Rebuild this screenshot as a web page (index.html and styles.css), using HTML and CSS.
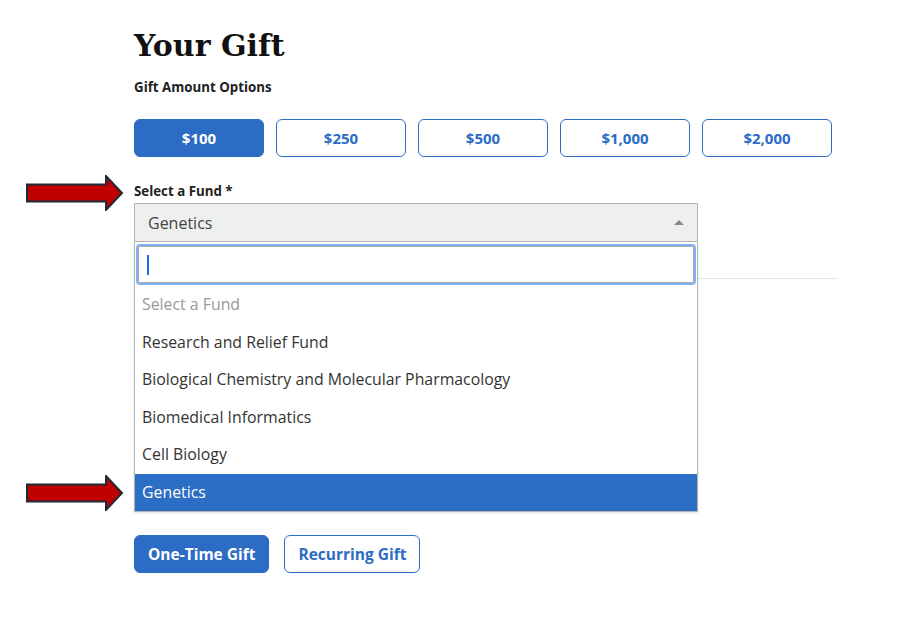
FILE: index.html
```html
<!DOCTYPE html>
<html lang="en">
<head>
    <meta charset="UTF-8">
    <meta name="viewport" content="width=device-width, initial-scale=1.0">
    <title>Your Gift</title>
    <link rel="stylesheet" href="styles.css">
</head>
<body>
    <div class="page">
        <h1 class="title">Your Gift</h1>
        <div class="field-label amount-label">Gift Amount Options</div>
        <div class="amounts">
            <button class="btn btn-solid">$100</button>
            <button class="btn btn-outline">$250</button>
            <button class="btn btn-outline">$500</button>
            <button class="btn btn-outline">$1,000</button>
            <button class="btn btn-outline">$2,000</button>
        </div>

        <div class="field-label fund-label">Select a Fund *</div>
        <div class="select">
            <div class="select-box">
                <span class="select-value">Genetics</span>
                <span class="select-caret"></span>
            </div>
            <div class="dropdown">
                <div class="search">
                    <span class="text-cursor"></span>
                </div>
                <ul class="options">
                    <li class="option placeholder">Select a Fund</li>
                    <li class="option">Research and Relief Fund</li>
                    <li class="option">Biological Chemistry and Molecular Pharmacology</li>
                    <li class="option">Biomedical Informatics</li>
                    <li class="option">Cell Biology</li>
                    <li class="option selected">Genetics</li>
                </ul>
            </div>
        </div>

        <hr class="divider">

        <div class="frequency">
            <button class="btn btn-solid btn-wide">One-Time Gift</button>
            <button class="btn btn-outline btn-wide">Recurring Gift</button>
        </div>
    </div>

    <svg class="pointer pointer-top" width="98" height="36" viewBox="0 0 98 36">
        <path d="M1 9.5 H80 V1 L96 18 L80 35 V26.5 H1 Z" fill="#c00000" stroke="#1d2b38" stroke-width="2" stroke-linejoin="miter"/>
    </svg>
    <svg class="pointer pointer-bottom" width="98" height="36" viewBox="0 0 98 36">
        <path d="M1 9.5 H80 V1 L96 18 L80 35 V26.5 H1 Z" fill="#c00000" stroke="#1d2b38" stroke-width="2" stroke-linejoin="miter"/>
    </svg>
</body>
</html>
```

FILE: styles.css
```css
body {
    margin: 0;
    background-color: #fff;
    font-family: 'Open Sans', 'Noto Sans', sans-serif;
    color: #222;
}

.page {
    padding: 28px 0 0 134px;
}

.title {
    margin: 0;
    font-family: 'DejaVu Serif', 'Liberation Serif', serif;
    font-size: 30px;
    line-height: 36px;
    font-weight: bold;
    color: #111;
}

.field-label {
    font-size: 13.3px;
    font-weight: bold;
    line-height: 18px;
    color: #222;
}

.amount-label {
    margin-top: 14px;
}

.amounts {
    display: flex;
    gap: 12px;
    margin-top: 23px;
}

.btn {
    box-sizing: border-box;
    height: 38px;
    width: 130px;
    border-radius: 6px;
    font-family: 'Open Sans', 'Noto Sans', sans-serif;
    font-size: 15px;
    font-weight: bold;
    cursor: pointer;
}

.btn-solid {
    background-color: #2c6cc5;
    border: 1px solid #2c6cc5;
    color: #fff;
}

.btn-outline {
    background-color: #fff;
    border: 1px solid #2c6cc5;
    color: #2c6cc5;
}

.btn-wide {
    width: auto;
    padding: 0 13px;
    font-size: 15.5px;
}

.fund-label {
    margin-top: 25px;
}

.select {
    position: relative;
    width: 564px;
    margin-top: 3px;
}

.select-box {
    box-sizing: border-box;
    height: 39px;
    display: flex;
    align-items: center;
    justify-content: space-between;
    padding: 0 13px;
    background-color: #eeefef;
    border: 1px solid #b4b4b4;
    font-size: 16px;
    color: #444;
}

.select-caret {
    width: 0;
    height: 0;
    border-left: 5px solid transparent;
    border-right: 5px solid transparent;
    border-bottom: 5px solid #888;
}

.dropdown {
    position: absolute;
    top: 100%;
    left: 0;
    right: 0;
    z-index: 10;
    background-color: #fff;
    border: 1px solid #b4b4b4;
    border-top: none;
    box-shadow: 0 1px 2px rgba(0, 0, 0, 0.12);
}

.search {
    box-sizing: border-box;
    height: 37px;
    margin: 4px 3px 3px 3px;
    border: 1px solid #a9a9a9;
    box-shadow: 0 0 0 2px #80b2f6;
    border-radius: 2px;
    display: flex;
    align-items: center;
    padding-left: 8px;
}

.text-cursor {
    width: 2px;
    height: 20px;
    background-color: #1a6cf0;
}

.options {
    list-style: none;
    margin: 0;
    padding: 0;
}

.option {
    padding: 8px 7px;
    line-height: 21.5px;
    font-size: 15.85px;
    color: #333;
}

.option.placeholder {
    color: #999;
}

.option.selected {
    background-color: #2c6dc6;
    color: #fff;
}

.divider {
    width: 704px;
    margin: 36px 0 0 0;
    border: none;
    border-top: 1px solid #e6e6e6;
}

.frequency {
    display: flex;
    gap: 15px;
    margin-top: 256px;
}

.pointer {
    position: absolute;
    left: 26px;
}

.pointer-top {
    top: 175px;
}

.pointer-bottom {
    top: 475px;
}
```
